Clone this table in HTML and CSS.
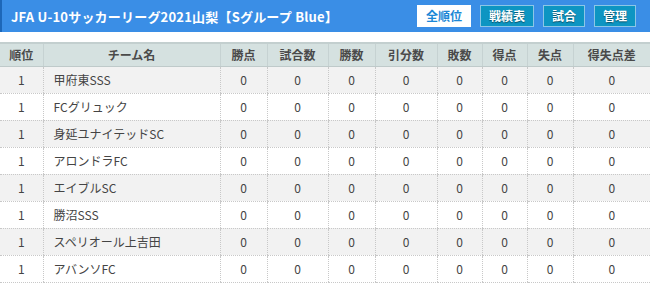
FILE: index.html
```html
<!DOCTYPE html>
<html lang="ja">
<head>
<meta charset="utf-8">
<link rel="stylesheet" href="styles.css">
</head>
<body>
<div class="bar">
  <h1 class="title">JFA U-10サッカーリーグ2021山梨【Sグループ Blue】</h1>
  <nav class="nav">
    <a class="btn btn-active">全順位</a>
    <a class="btn">戦績表</a>
    <a class="btn">試合</a>
    <a class="btn">管理</a>
  </nav>
</div>
<table class="standings">
  <colgroup>
    <col style="width:43px"><col style="width:177px"><col style="width:47px"><col style="width:61px"><col style="width:47px"><col style="width:62px"><col style="width:45px"><col style="width:45px"><col style="width:46px"><col>
  </colgroup>
  <thead>
    <tr><th>順位</th><th>チーム名</th><th>勝点</th><th>試合数</th><th>勝数</th><th>引分数</th><th>敗数</th><th>得点</th><th>失点</th><th>得失点差</th></tr>
  </thead>
  <tbody>
    <tr><td>1</td><td class="team">甲府東SSS</td><td>0</td><td>0</td><td>0</td><td>0</td><td>0</td><td>0</td><td>0</td><td>0</td></tr>
    <tr><td>1</td><td class="team">FCグリュック</td><td>0</td><td>0</td><td>0</td><td>0</td><td>0</td><td>0</td><td>0</td><td>0</td></tr>
    <tr><td>1</td><td class="team">身延ユナイテッドSC</td><td>0</td><td>0</td><td>0</td><td>0</td><td>0</td><td>0</td><td>0</td><td>0</td></tr>
    <tr><td>1</td><td class="team">アロンドラFC</td><td>0</td><td>0</td><td>0</td><td>0</td><td>0</td><td>0</td><td>0</td><td>0</td></tr>
    <tr><td>1</td><td class="team">エイブルSC</td><td>0</td><td>0</td><td>0</td><td>0</td><td>0</td><td>0</td><td>0</td><td>0</td></tr>
    <tr><td>1</td><td class="team">勝沼SSS</td><td>0</td><td>0</td><td>0</td><td>0</td><td>0</td><td>0</td><td>0</td><td>0</td></tr>
    <tr><td>1</td><td class="team">スペリオール上吉田</td><td>0</td><td>0</td><td>0</td><td>0</td><td>0</td><td>0</td><td>0</td><td>0</td></tr>
    <tr><td>1</td><td class="team">アバンソFC</td><td>0</td><td>0</td><td>0</td><td>0</td><td>0</td><td>0</td><td>0</td><td>0</td></tr>
  </tbody>
</table>
</body>
</html>
```

FILE: styles.css
```css
* { box-sizing: border-box; }
html, body { margin: 0; padding: 0; background: #fff; }
body {
  font-family: "Noto Sans CJK JP", "Noto Sans", sans-serif;
  color: #444;
  font-size: 12px;
  width: 650px;
}
.bar {
  height: 32px;
  background: #3a8ee6;
  border-left: 2px solid #1d67b8;
  display: flex;
  align-items: center;
  justify-content: space-between;
  padding: 0 14px 0 9px;
}
.title {
  margin: 0;
  color: #fff;
  font-size: 13px;
  font-weight: bold;
  letter-spacing: 0.2px;
}
.nav {
  display: flex;
  gap: 9px;
  align-items: center;
}
.btn {
  display: block;
  height: 22px;
  line-height: 20px;
  padding: 0 8px;
  background: #0d95c2;
  border: 1px solid #8cc6e6;
  color: #fff;
  font-weight: bold;
  font-size: 12px;
  text-shadow: 0 1px 1px rgba(0,0,0,0.45);
}
.btn-active {
  background: #fff;
  color: #1b87d6;
  border-color: #fff;
  text-shadow: none;
}
.standings {
  margin-top: 10px;
  width: 650px;
  border-collapse: collapse;
  table-layout: fixed;
}
.standings th {
  height: 23px;
  background: #d5e1e0;
  border-top: 2px solid #c3cfcf;
  border-bottom: 1px solid #bfcaca;
  border-left: 1px solid #c6d2d2;
  font-weight: bold;
  font-size: 12px;
  color: #4a4a4a;
  text-align: center;
  padding: 0;
}
.standings th:first-child, .standings td:first-child { border-left: none; }
.standings td {
  height: 27px;
  border-bottom: 1px dotted #c8c8c8;
  border-left: 1px dotted #c8c8c8;
  text-align: center;
  padding: 0;
  color: #444;
  font-size: 12px;
}
.standings tbody tr:nth-child(odd) td { background: #f2f2f2; }
.standings td.team {
  text-align: left;
  padding-left: 10px;
}
```
